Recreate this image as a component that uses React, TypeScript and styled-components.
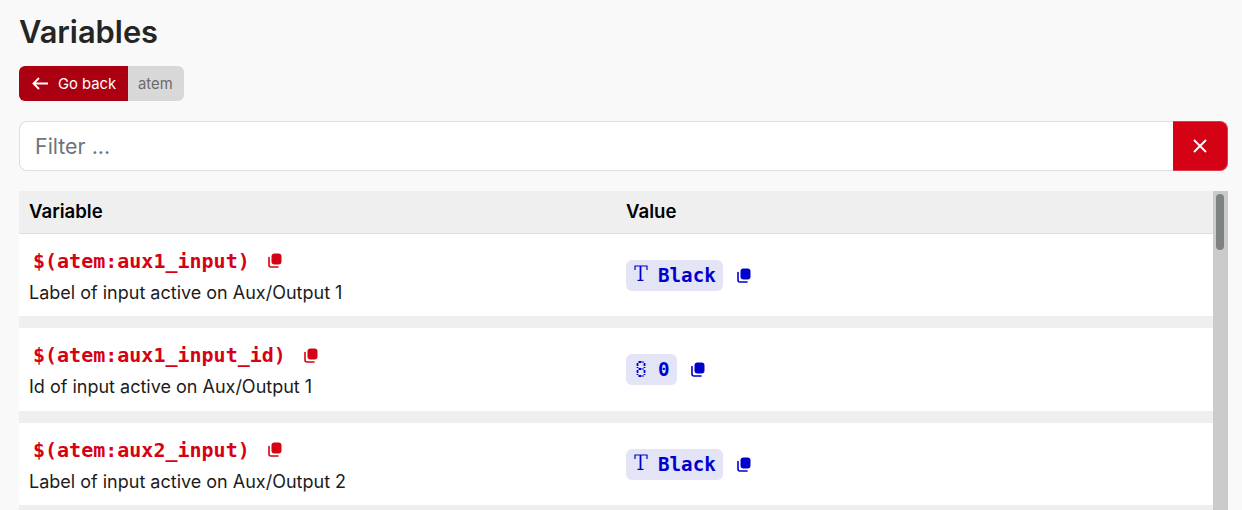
import { createGlobalStyle, styled } from "styled-components";

const rows = [
  { name: "$(atem:aux1_input)", label: "Label of input active on Aux/Output 1", kind: "text", value: "Black" },
  { name: "$(atem:aux1_input_id)", label: "Id of input active on Aux/Output 1", kind: "number", value: "0" },
  { name: "$(atem:aux2_input)", label: "Label of input active on Aux/Output 2", kind: "text", value: "Black" },
];

const BackArrow = () => (
  <svg width="16" height="13" viewBox="0 0 16 13" fill="none" stroke="#fff" strokeWidth="1.9">
    <path d="M1.5 6.5H16M7 1L1.5 6.5L7 12" />
  </svg>
);

const CloseCross = () => (
  <svg width="14" height="14" viewBox="0 0 14 14" fill="none" stroke="#fff" strokeWidth="2">
    <path d="M1 1L13 13M13 1L1 13" />
  </svg>
);

const TextIcon = () => (
  <svg width="14" height="20" viewBox="0 0 14 20" fill="none" stroke="#0000cd" strokeWidth="1.2">
    <path d="M1 5V1H13V5" />
    <path d="M6.5 1V15.4" strokeWidth="1.8" />
    <path d="M3.5 15.4H9.5" />
  </svg>
);

const NumberIcon = () => (
  <svg width="14" height="18" viewBox="0 0 14 18" fill="none" stroke="#0000cd" strokeWidth="1.8">
    <path d="M4.5 1H9.5M4.5 8H9.5M4.5 15H9.5M3.5 2V7M10.5 2V7M3.5 9V14M10.5 9V14" strokeDasharray="3 1" />
  </svg>
);

const CopyIcon = ({ color }: { color: string }) => (
  <CopySvg viewBox="0 0 14 15" fill={color}>
    <rect x="3.5" y="0.5" width="10" height="11" rx="3" />
    <path d="M1 4.5V12a2 2 0 0 0 2 2h7" fill="none" stroke={color} strokeWidth="1.6" strokeLinecap="round" />
  </CopySvg>
);

const App = () => {
  return (
    <Page>
      <GlobalStyle />
      <Title>Variables</Title>
      <ButtonGroup>
        <BackButton>
          <BackArrow />
          Go back
        </BackButton>
        <ConnectionTag>atem</ConnectionTag>
      </ButtonGroup>
      <FilterRow>
        <FilterInput placeholder="Filter ..." />
        <ClearButton>
          <CloseCross />
        </ClearButton>
      </FilterRow>
      <TableWrap>
        <TableScroll>
          <Table>
            <thead>
              <tr>
                <HeaderCell>Variable</HeaderCell>
                <HeaderCell>Value</HeaderCell>
              </tr>
            </thead>
            <tbody>
              {rows.map((row) => (
                <tr key={row.name}>
                  <NameCell>
                    <NameLine>
                      <VarName>{row.name}</VarName>
                      <CopyIcon color="#d50215" />
                    </NameLine>
                    <Description>{row.label}</Description>
                  </NameCell>
                  <ValueCell>
                    <ValueLine>
                      <ValuePill>
                        {row.kind === "text" ? <TextIcon /> : <NumberIcon />}
                        {row.value}
                      </ValuePill>
                      <CopyIcon color="#0000cd" />
                    </ValueLine>
                  </ValueCell>
                </tr>
              ))}
            </tbody>
          </Table>
        </TableScroll>
        <ScrollTrack>
          <ScrollThumb />
        </ScrollTrack>
      </TableWrap>
    </Page>
  );
};

const GlobalStyle = createGlobalStyle`
  html, body {
    margin: 0;
    height: 100%;
    overflow: hidden;
    background: #f9f9f9;
  }
`;

const Page = styled.div`
  box-sizing: border-box;
  height: 510px;
  padding: 0 14px 0 19px;
  font-family: Inter, "Liberation Sans", sans-serif;
  color: #212529;
  overflow: hidden;
`;

const Title = styled.h1`
  margin: 0;
  padding-top: 14px;
  font-size: 30.8px;
  line-height: 36px;
  font-weight: 600;
  color: #252525;
`;

const ButtonGroup = styled.div`
  display: flex;
  margin-top: 16px;
  width: fit-content;
  height: 35px;
  border-radius: 6px;
  overflow: hidden;
  font-size: 14.8px;
`;

const BackButton = styled.div`
  display: flex;
  align-items: center;
  gap: 10px;
  width: 109px;
  box-sizing: border-box;
  padding-left: 13px;
  background: #ab0011;
  color: #fff;
`;

const ConnectionTag = styled.div`
  display: flex;
  align-items: center;
  padding: 0 11px 0 10px;
  background: #d8d8d8;
  color: #6b6b6b;
`;

const FilterRow = styled.div`
  display: flex;
  margin-top: 20px;
  height: 50px;
`;

const FilterInput = styled.input`
  flex: 1;
  min-width: 0;
  box-sizing: border-box;
  padding: 0 15px;
  border: 1px solid #dbdfe6;
  border-right: none;
  border-radius: 8px 0 0 8px;
  background: #fff;
  font-family: inherit;
  font-size: 21.4px;
  outline: none;

  &::placeholder {
    color: #6c757d;
    opacity: 1;
  }
`;

const ClearButton = styled.div`
  display: flex;
  align-items: center;
  justify-content: center;
  box-sizing: border-box;
  width: 55px;
  background: #d50215;
  border: 1px solid #e4394a;
  border-left: none;
  border-radius: 0 8px 8px 0;
`;

const TableWrap = styled.div`
  display: flex;
  margin-top: 20px;
  height: 319px;
`;

const TableScroll = styled.div`
  flex: 1;
  min-width: 0;
  background: #fff;
  overflow: hidden;
`;

const Table = styled.table`
  width: 100%;
  border-collapse: collapse;
  table-layout: fixed;
`;

const HeaderCell = styled.th`
  height: 40px;
  padding: 0 10px 2px;
  background: #efefef;
  border-bottom: 1px solid #dedede;
  text-align: left;
  font-size: 18.6px;
  font-weight: 600;
  color: #000;
`;

const NameCell = styled.td`
  box-sizing: border-box;
  height: 94px;
  padding: 2px 10px 0;
  border-bottom: 12px solid #efefef;
  vertical-align: middle;
  tr:nth-child(1) > & {
    height: 88px;
  }
  tr:nth-child(2) > & {
    height: 95px;
  }
`;

const ValueCell = styled(NameCell)`
  padding-top: 1px;
`;

const NameLine = styled.div`
  display: flex;
  align-items: center;
  gap: 18px;
  padding-left: 4px;
`;

const VarName = styled.span`
  font-family: "DejaVu Sans Mono", monospace;
  font-size: 20px;
  font-weight: 700;
  color: #d50215;
`;

const Description = styled.div`
  margin-top: 9px;
  font-size: 18px;
  color: #1c1c1c;
`;

const ValueLine = styled.div`
  display: flex;
  align-items: center;
  gap: 14px;
`;

const ValuePill = styled.span`
  display: flex;
  align-items: center;
  gap: 10px;
  height: 31px;
  padding: 0 7px 0 8px;
  border-radius: 6px;
  background: #e4e4f7;
  font-family: "DejaVu Sans Mono", monospace;
  font-size: 19.2px;
  font-weight: 700;
  color: #0000cd;
`;

const CopySvg = styled.svg`
  width: 14px;
  height: 15px;
  flex: none;
`;

const ScrollTrack = styled.div`
  width: 15px;
  background: #cbcbcb;
  padding: 3px 4px 0 3px;
  box-sizing: border-box;
`;

const ScrollThumb = styled.div`
  width: 8px;
  height: 56px;
  border-radius: 4px;
  background: #7f8283;
`;

export default App;
